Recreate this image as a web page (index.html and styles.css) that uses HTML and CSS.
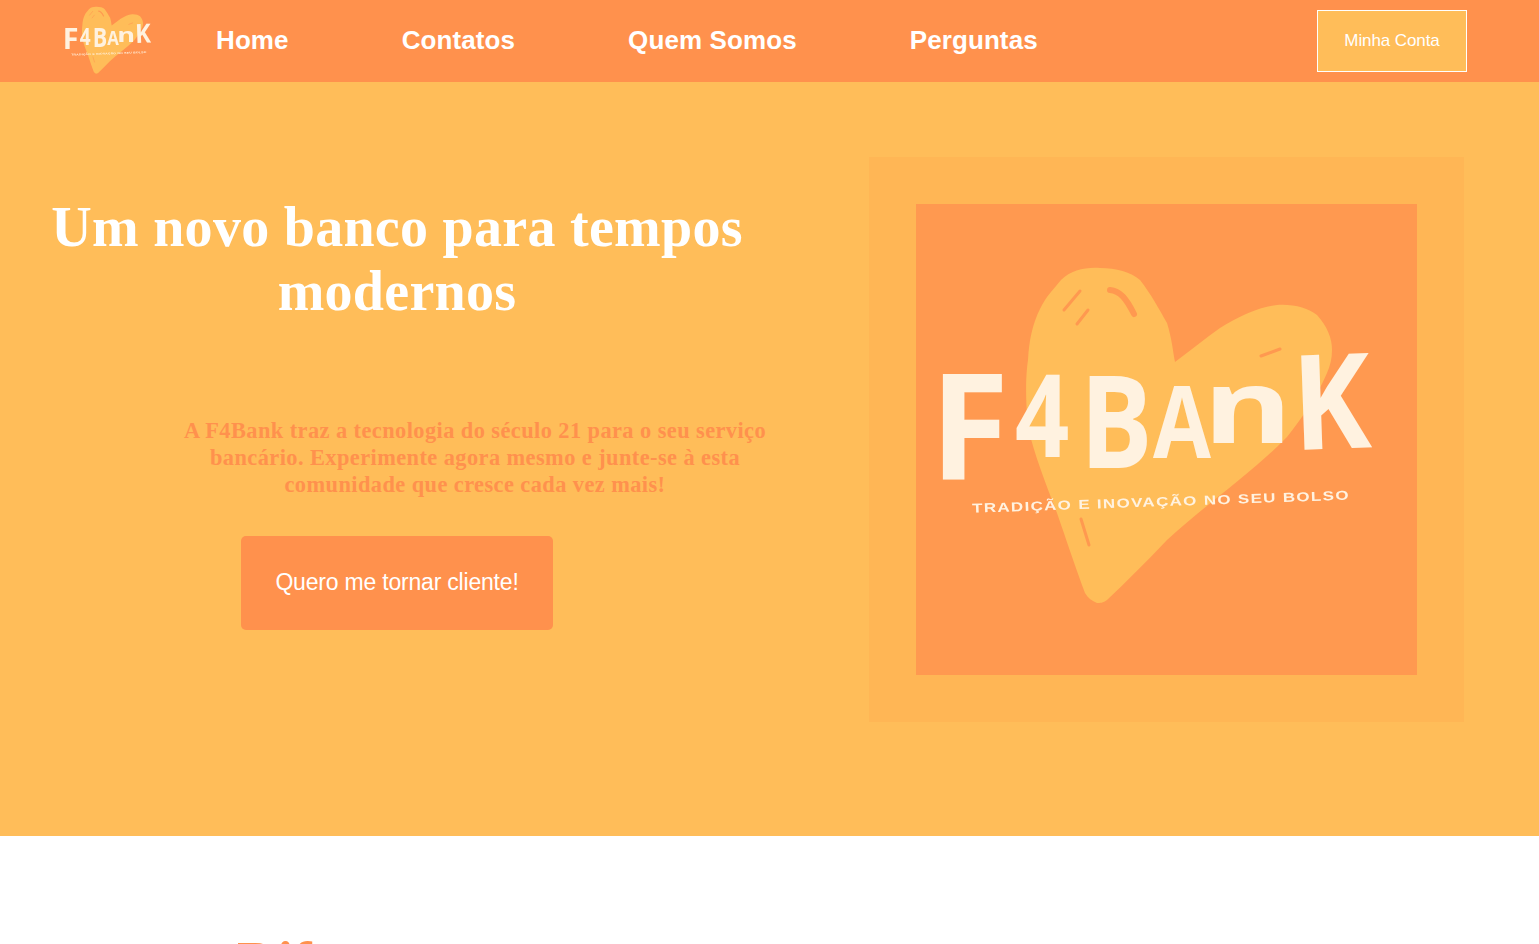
FILE: index.html
```html
<!DOCTYPE html>
<html lang="pt-BR">
<head>
<meta charset="utf-8">
<title>F4Bank</title>
<link rel="stylesheet" href="styles.css">
</head>
<body>
<svg class="defs" width="0" height="0" aria-hidden="true">
  <symbol id="f4heart" viewBox="0 0 501 471">
    <path class="heart" d="M112 223 C109 190 110 170 112 156 C113 135 117 119 124 105 C130 92 137 86 145 76 C155 66 170 63 184 64 C200 64 215 68 224 76 C235 90 243 105 251 119 C256 135 257 148 259 158 C275 146 290 134 304 124 C322 113 342 103 361 101 C378 100 392 104 401 111 C411 122 416 134 416 146 C416 155 414 162 411 169 C400 195 385 215 371 233 C335 270 290 300 251 336 C230 358 210 378 191 396 C187 399 184 399 181 399 C176 397 172 394 169 389 C160 365 150 335 141 309 C130 280 118 250 112 223 Z"/>
    <g class="marks">
      <path d="M194 86 C204 87 210 94 218 110"/>
      <path d="M148 106 L164 87"/>
      <path d="M161 120 L172 106"/>
      <path d="M345 152 L364 145"/>
      <path d="M165 315 L173 341"/>
    </g>
  </symbol>
</svg>
<header class="nav">
  <a class="brand" href="#">
    <svg class="logo-sm" viewBox="0 0 501 471" role="img" aria-label="F4Bank">
      <use href="#f4heart"/>
      <text class="logo-word" transform="translate(14 276) scale(1.18 1.2)" font-size="122">F</text>
      <text class="logo-word" transform="scale(1 1.2)"><tspan x="99" y="211" font-size="95">4</tspan><tspan x="164" y="220" font-size="108">B</tspan><tspan x="237" y="212" font-size="84">A</tspan></text>
      <text class="logo-word" transform="translate(287 239) scale(1.6 1.2)" font-size="85">n</text>
      <text class="logo-word" transform="translate(378 246) rotate(-2) scale(1.07 1.2)" font-size="110">K</text>
      <text class="logo-tag" x="56" y="302" textLength="378" lengthAdjust="spacingAndGlyphs" transform="rotate(-2 250 300)">TRADIÇÃO E INOVAÇÃO NO SEU BOLSO</text>
    </svg>
  </a>
  <nav class="menu">
    <a href="#">Home</a>
    <a href="#">Contatos</a>
    <a href="#">Quem Somos</a>
    <a href="#">Perguntas</a>
  </nav>
  <a class="account" href="#">Minha Conta</a>
</header>
<main>
  <section class="hero">
    <div class="hero-copy">
      <h1>Um novo banco para tempos modernos</h1>
      <p>A F4Bank traz a tecnologia do século 21 para o seu serviço bancário. Experimente agora mesmo e junte-se à esta comunidade que cresce cada vez mais!</p>
      <a class="cta" href="#">Quero me tornar cliente!</a>
    </div>
    <div class="panel">
      <div class="picture">
        <svg class="logo-lg" viewBox="0 0 501 471" role="img" aria-label="F4Bank">
          <use href="#f4heart"/>
          <text class="logo-word" transform="translate(14 276) scale(1.18 1.2)" font-size="122">F</text>
          <text class="logo-word" transform="scale(1 1.2)"><tspan x="99" y="211" font-size="95">4</tspan><tspan x="164" y="220" font-size="108">B</tspan><tspan x="237" y="212" font-size="84">A</tspan></text>
          <text class="logo-word" transform="translate(287 239) scale(1.6 1.2)" font-size="85">n</text>
          <text class="logo-word" transform="translate(378 246) rotate(-2) scale(1.07 1.2)" font-size="110">K</text>
          <text class="logo-tag" x="56" y="302" textLength="378" lengthAdjust="spacingAndGlyphs" transform="rotate(-2 250 300)">TRADIÇÃO E INOVAÇÃO NO SEU BOLSO</text>
        </svg>
      </div>
    </div>
  </section>
  <section class="features">
    <h2>Diferenças</h2>
  </section>
</main>
</body>
</html>
```
FILE: styles.css
```css
* { box-sizing: border-box; }
html, body { margin: 0; background: #fff; }
body { font-family: "Liberation Sans", Arial, sans-serif; color: #fff; }
a { color: inherit; text-decoration: none; }
.defs { position: absolute; }

.nav { height: 82px; background: #ff914d; display: flex; align-items: center; padding-left: 60px; padding-right: 72px; }
.brand { display: flex; align-items: center; width: 100px; height: 94px; flex: none; }
.logo-sm { display: block; width: 100px; height: 94px; filter: blur(.35px); }
.menu { display: flex; gap: 113px; margin-left: 56px; padding-bottom: 2px; font-size: 26px; font-weight: 700; letter-spacing: .1px; }
.account { margin-left: auto; width: 150px; height: 62px; display: flex; align-items: center; justify-content: center; background: #ffbd59; border: 1px solid #fff; font-size: 17px; letter-spacing: -0.1px; }

.hero { height: 754px; background: #ffbd59; display: flex; padding-top: 75px; padding-right: 75px; }
.hero-copy { width: 794px; flex: none; display: flex; flex-direction: column; align-items: center; }
.hero-copy h1 { margin: 38px 0 0; width: 100%; padding: 0 40px; text-align: center; font: 700 56px/64px "Liberation Serif", "Times New Roman", serif; letter-spacing: .28px; }
.hero-copy p { margin: 94px 0 0 156px; width: 600px; text-align: center; color: #ff914d; font: 700 22.4px/27px "Liberation Serif", "Times New Roman", serif; letter-spacing: .42px; }
.cta { margin-top: 38px; width: 312px; height: 94px; background: #ff914d; border-radius: 5px; display: flex; align-items: center; justify-content: center; font-size: 23px; letter-spacing: -.2px; padding-bottom: 2px; }

.panel { margin-left: 75px; width: 595px; height: 565px; padding: 47px; background: #ffb655; }
.picture { width: 501px; height: 471px; background: #ff9950; }
.logo-lg { display: block; width: 501px; height: 471px; filter: blur(.7px); }
.heart { fill: #ffbd59; }
.marks path { fill: none; stroke: #ff9950; stroke-width: 3px; stroke-linecap: round; }
.marks path:first-child { stroke-width: 6px; }
.logo-word { font-family: "Open Sans", "Liberation Sans", sans-serif; font-weight: 700; fill: #fff2e0; }
.logo-tag { font: 700 13px "Liberation Sans", sans-serif; fill: #fff2e0; letter-spacing: 1px; }

.features { background: #fff; padding: 94px 0 60px 237px; }
.features h2 { margin: 0; color: #ff914d; font: 700 56px/64px "Liberation Serif", "Times New Roman", serif; }
```
